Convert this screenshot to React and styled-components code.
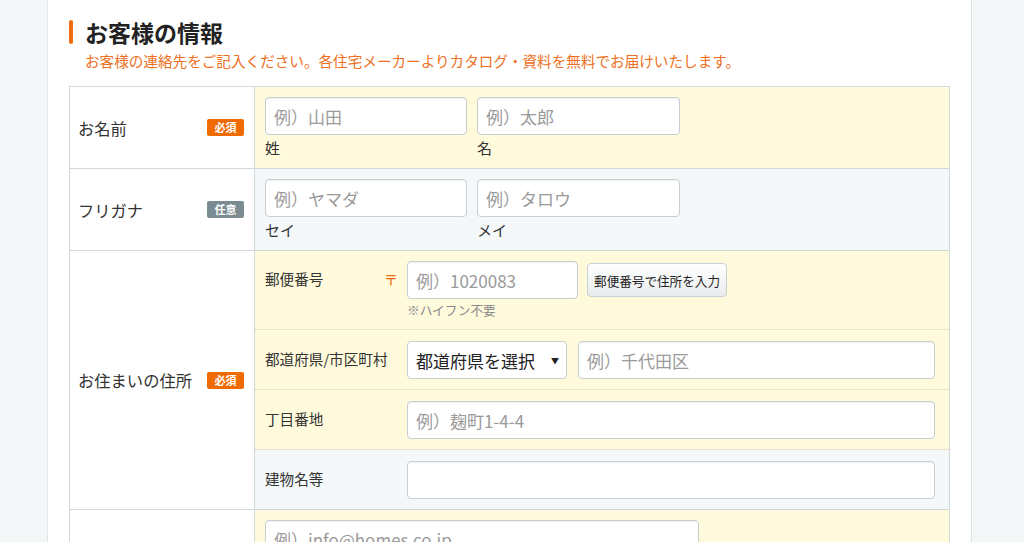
import styled, { createGlobalStyle } from 'styled-components';

const GlobalStyle = createGlobalStyle`
  body {
    margin: 0;
    background: #f4f7f8;
    font-family: "Noto Sans CJK JP", "Noto Sans", sans-serif;
    color: #333;
  }
`;

const Page = styled.div`
  width: 925px;
  margin-left: 47px;
  min-height: 542px;
  background: #fff;
  border-left: 1px solid #e1e6e8;
  border-right: 1px solid #dde3e6;
  padding: 18px 21px 0 21px;
  box-sizing: border-box;
`;

const Title = styled.h2`
  display: flex;
  align-items: center;
  gap: 12px;
  margin: 0;
  font-size: 23px;
  font-weight: 700;
  line-height: 28px;
  color: #222;

  &::before {
    content: '';
    width: 4px;
    height: 24px;
    border-radius: 2px;
    background: #ee6c12;
  }
`;

const Lead = styled.p`
  margin: 4px 0 0 16px;
  font-size: 14.6px;
  line-height: 22px;
  color: #ee7023;
`;

const FormTable = styled.div`
  margin-top: 14px;
  border: 1px solid #cfd8dc;
  border-bottom: none;
`;

const Row = styled.div`
  display: grid;
  grid-template-columns: 185px 1fr;
  border-bottom: 1px solid #cfd8dc;
`;

const Head = styled.div`
  display: flex;
  align-items: center;
  justify-content: space-between;
  padding: 0 10px 0 8px;
  background: #fff;
  border-right: 1px solid #cfd8dc;
  font-size: 16.3px;
`;

const Badge = styled.span`
  display: inline-block;
  width: 37px;
  height: 17px;
  line-height: 17px;
  border-radius: 2px;
  text-align: center;
  font-size: 11px;
  font-weight: 700;
  color: #fff;
  background: ${(p) => (p.$optional ? '#7b8b92' : '#ef6a00')};
`;

const Cell = styled.div`
  background: ${(p) => (p.$tone === 'gray' ? '#f4f8f9' : '#fffadb')};
  padding: ${(p) => (p.$flush ? '0' : '10px 10px 10px 10px')};
`;

const Pair = styled.div`
  display: flex;
  gap: 10px;
`;

const Field = styled.div`
  display: flex;
  flex-direction: column;
  gap: 3px;
`;

const Caption = styled.span`
  font-size: 15px;
  line-height: 20px;
  color: #333;
`;

const Input = styled.input`
  box-sizing: border-box;
  width: ${(p) => p.$w || '100%'};
  height: 38px;
  padding: 0 8px;
  border: 1px solid #c6ced2;
  border-radius: 4px;
  background: #fff;
  box-shadow: inset 0 1px 1px rgba(0, 0, 0, 0.06);
  font-family: inherit;
  font-size: 17px;
  color: #333;
  outline: none;

  &::placeholder {
    color: #9a9a9a;
  }
`;

const SubRow = styled.div`
  display: grid;
  grid-template-columns: 142px 1fr;
  padding: ${(p) => (p.$first ? '10px 14px 10px 10px' : '11px 14px 10px 10px')};
  background: ${(p) => (p.$tone === 'gray' ? '#f4f8f9' : '#fffadb')};
  border-bottom: ${(p) => (p.$last ? 'none' : '1px dotted #cfcfc4')};
`;

const SubLabel = styled.div`
  display: flex;
  justify-content: space-between;
  align-items: flex-start;
  padding-right: 9px;
  font-size: 14.6px;
  line-height: 36px;
  color: #333;
`;

const PostMark = styled.span`
  color: #ee6c12;
  font-size: 14px;
`;

const Controls = styled.div`
  display: flex;
  align-items: center;
  gap: ${(p) => p.$gap || 10}px;
`;

const Hint = styled.div`
  margin-top: 2px;
  font-size: 12.7px;
  line-height: 18px;
  color: #888;
`;

const LookupButton = styled.button`
  height: 34px;
  width: 140px;
  padding: 0;
  border: 1px solid #c9d0d4;
  border-radius: 4px;
  background: linear-gradient(#ffffff, #e8ebed);
  font-family: inherit;
  font-size: 12.6px;
  color: #222;
`;

const SelectWrap = styled.div`
  position: relative;
  width: 160px;
  flex: none;
`;

const Select = styled.select`
  box-sizing: border-box;
  width: 100%;
  height: 38px;
  padding: 0 24px 0 8px;
  border: 1px solid #c6ced2;
  border-radius: 4px;
  background: #fff;
  appearance: none;
  font-family: inherit;
  font-size: 17px;
  color: #222;
`;

const Arrow = styled.span`
  position: absolute;
  right: 8px;
  top: 50%;
  transform: translateY(-50%);
  font-size: 8px;
  color: #222;
  pointer-events: none;
`;

export default function App() {
  return (
    <>
      <GlobalStyle />
      <Page>
        <Title>お客様の情報</Title>
        <Lead>お客様の連絡先をご記入ください。各住宅メーカーよりカタログ・資料を無料でお届けいたします。</Lead>
        <FormTable>
          <Row>
            <Head>
              お名前<Badge>必須</Badge>
            </Head>
            <Cell>
              <Pair>
                <Field>
                  <Input $w="202px" placeholder="例）山田" />
                  <Caption>姓</Caption>
                </Field>
                <Field>
                  <Input $w="203px" placeholder="例）太郎" />
                  <Caption>名</Caption>
                </Field>
              </Pair>
            </Cell>
          </Row>
          <Row>
            <Head>
              フリガナ<Badge $optional>任意</Badge>
            </Head>
            <Cell $tone="gray">
              <Pair>
                <Field>
                  <Input $w="202px" placeholder="例）ヤマダ" />
                  <Caption>セイ</Caption>
                </Field>
                <Field>
                  <Input $w="203px" placeholder="例）タロウ" />
                  <Caption>メイ</Caption>
                </Field>
              </Pair>
            </Cell>
          </Row>
          <Row>
            <Head>
              お住まいの住所<Badge>必須</Badge>
            </Head>
            <Cell $flush>
              <SubRow $first>
                <SubLabel>
                  郵便番号<PostMark>〒</PostMark>
                </SubLabel>
                <div>
                  <Controls $gap={9}>
                    <Input $w="171px" placeholder="例）1020083" />
                    <LookupButton>郵便番号で住所を入力</LookupButton>
                  </Controls>
                  <Hint>※ハイフン不要</Hint>
                </div>
              </SubRow>
              <SubRow>
                <SubLabel>都道府県/市区町村</SubLabel>
                <Controls $gap={11}>
                  <SelectWrap>
                    <Select defaultValue="">
                      <option value="">都道府県を選択</option>
                    </Select>
                    <Arrow>▼</Arrow>
                  </SelectWrap>
                  <Input placeholder="例）千代田区" />
                </Controls>
              </SubRow>
              <SubRow>
                <SubLabel>丁目番地</SubLabel>
                <Input placeholder="例）麹町1-4-4" />
              </SubRow>
              <SubRow $tone="gray" $last>
                <SubLabel>建物名等</SubLabel>
                <Input />
              </SubRow>
            </Cell>
          </Row>
          <Row>
            <Head />
            <Cell>
              <Input $w="434px" placeholder="例）info@homes.co.jp" />
            </Cell>
          </Row>
        </FormTable>
      </Page>
    </>
  );
}
